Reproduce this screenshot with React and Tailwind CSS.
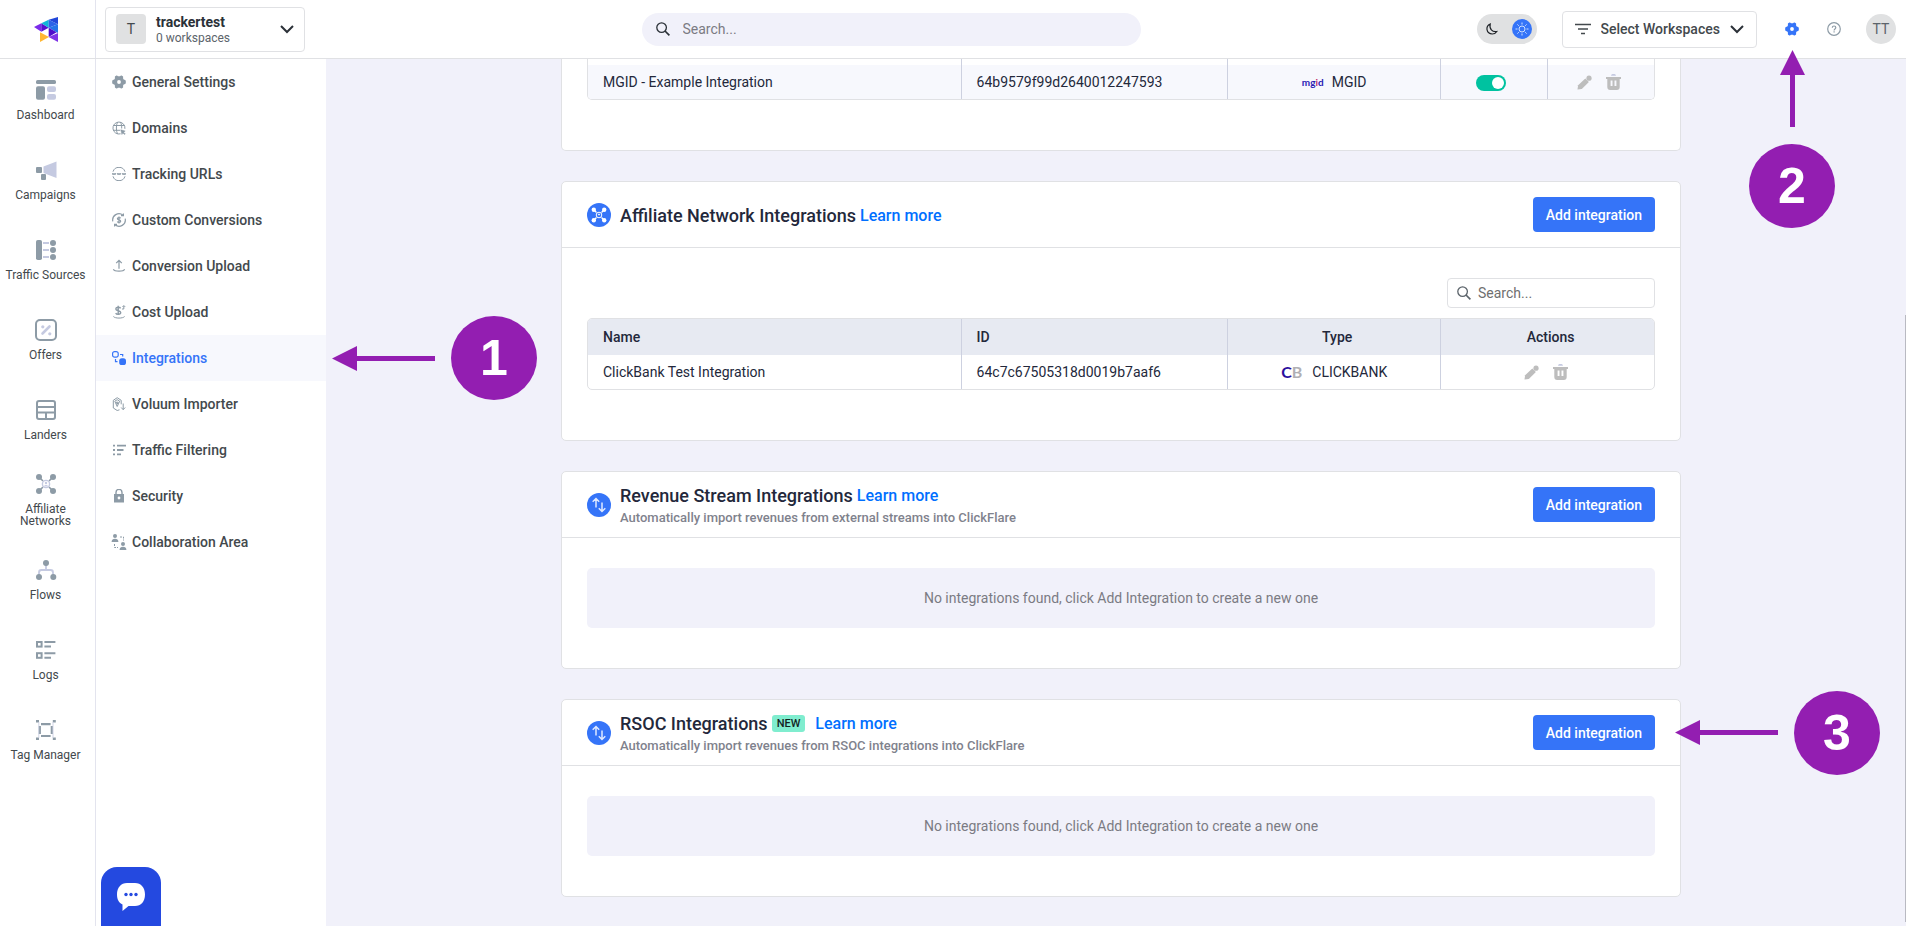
import { useState } from 'react'

const railItems = [
  { label: 'Dashboard', icon: DashboardIcon },
  { label: 'Campaigns', icon: CampaignsIcon },
  { label: 'Traffic Sources', icon: TrafficIcon },
  { label: 'Offers', icon: OffersIcon },
  { label: 'Landers', icon: LandersIcon },
  { label: 'Affiliate Networks', icon: NetworkIcon },
  { label: 'Flows', icon: FlowsIcon },
  { label: 'Logs', icon: LogsIcon },
  { label: 'Tag Manager', icon: TagIcon },
]

const settingsItems = [
  { label: 'General Settings', icon: GearIcon },
  { label: 'Domains', icon: DomainsIcon },
  { label: 'Tracking URLs', icon: UrlsIcon },
  { label: 'Custom Conversions', icon: ConversionsIcon },
  { label: 'Conversion Upload', icon: UploadIcon },
  { label: 'Cost Upload', icon: CostIcon },
  { label: 'Integrations', icon: IntegrationsIcon, active: true, step: 1 },
  { label: 'Voluum Importer', icon: VoluumIcon },
  { label: 'Traffic Filtering', icon: FilteringIcon },
  { label: 'Security', icon: LockIcon },
  { label: 'Collaboration Area', icon: CollaborationIcon },
]

function DashboardIcon() {
  return (
    <svg width="22" height="22" viewBox="0 0 22 22" fill="#8d9ba6">
      <rect x="1" y="1" width="20" height="4" rx="1.6" />
      <rect x="1" y="7.3" width="9" height="13.5" rx="2" />
      <rect x="12" y="7.3" width="9" height="5.6" rx="2" fill="#c5cae1" />
      <rect x="12" y="15" width="9" height="5.8" rx="2" fill="#c5cae1" />
    </svg>
  )
}

function CampaignsIcon() {
  return (
    <svg width="22" height="22" viewBox="0 0 22 22" fill="#8d9ba6">
      <rect x="1" y="8" width="6" height="6" rx="1" />
      <rect x="6" y="15" width="5" height="6" rx="1" />
      <path d="M8.5 7.5 21.5 2.5v16.5L8.5 14z" fill="#c5cae1" />
    </svg>
  )
}

function TrafficIcon() {
  return (
    <svg width="22" height="22" viewBox="0 0 22 22" fill="#8d9ba6">
      <rect x="1" y="1" width="6" height="20" rx="1.8" />
      <path d="M8 4h6M8 11h6M8 18h6" stroke="#c5cae1" strokeWidth="1.8" />
      <circle cx="18" cy="4" r="3" />
      <circle cx="18" cy="11" r="3" />
      <circle cx="18" cy="18" r="3" />
    </svg>
  )
}

function OffersIcon() {
  return (
    <svg width="22" height="22" viewBox="0 0 22 22" fill="none">
      <rect x="1" y="1" width="20" height="20" rx="4" stroke="#8d9ba6" strokeWidth="2" />
      <path d="M7.5 14.5l7-7" stroke="#c5cae1" strokeWidth="2.6" strokeLinecap="round" />
      <circle cx="7.8" cy="7.8" r="1.6" fill="#c5cae1" />
      <circle cx="14.8" cy="14.8" r="1.6" fill="#c5cae1" />
    </svg>
  )
}

function LandersIcon() {
  return (
    <svg width="22" height="22" viewBox="0 0 22 22" fill="none" stroke="#8d9ba6" strokeWidth="2">
      <rect x="2" y="2" width="18" height="18" rx="2" />
      <path d="M2 8h18M2 13.6h18M11 13.6V20" />
    </svg>
  )
}

function NetworkIcon() {
  return (
    <svg width="22" height="22" viewBox="0 0 22 22" fill="#8d9ba6">
      <path d="M4 4l4 4M18 4l-4 4M4 18l4-4M18 18l-4-4" stroke="#8d9ba6" strokeWidth="1.6" />
      <circle cx="4" cy="4" r="3" />
      <circle cx="18" cy="4" r="3" />
      <circle cx="4" cy="18" r="3" />
      <circle cx="18" cy="18" r="3" />
      <circle cx="11" cy="11" r="3.6" fill="none" stroke="#c5cae1" strokeWidth="1.4" />
      <circle cx="11" cy="10" r="1.2" fill="#c5cae1" />
      <path d="M8.8 13.4a2.4 2.4 0 0 1 4.4 0z" fill="#c5cae1" />
    </svg>
  )
}

function FlowsIcon() {
  return (
    <svg width="22" height="22" viewBox="0 0 22 22" fill="#8d9ba6">
      <path
        d="M11 4v7M4 18v-4.6A2.4 2.4 0 0 1 6.4 11h9.2a2.4 2.4 0 0 1 2.4 2.4V18"
        fill="none"
        stroke="#c5cae1"
        strokeWidth="1.8"
      />
      <circle cx="11" cy="4" r="3" />
      <circle cx="4" cy="18" r="3" />
      <circle cx="18.3" cy="18" r="3" />
    </svg>
  )
}

function LogsIcon() {
  return (
    <svg width="22" height="22" viewBox="0 0 22 22" fill="none" stroke="#8d9ba6" strokeWidth="2">
      <rect x="2" y="3" width="4.6" height="4.6" />
      <rect x="2" y="14.2" width="4.6" height="4.6" />
      <path d="M9.4 3h11M9.4 7.6h6.6M9.4 14.2h11M9.4 18.8h6.6" />
    </svg>
  )
}

function TagIcon() {
  return (
    <svg width="22" height="22" viewBox="0 0 22 22" fill="#8d9ba6">
      <path d="M6 5.2h9.6M6 17h9.6M4.8 7v8M16.8 7v8" stroke="#8d9ba6" strokeWidth="2.2" />
      <path d="M1 1h3v2.6H1zM17.8 1h3v2.600h-3zM1 18.400h3V21H1zM17.800 18.400h3V21h-3z" />
      <path d="M3.800 3v16M18 3v16" stroke="#c5cae1" strokeWidth=".8" />
    </svg>
  )
}

function GearIcon() {
  return (
    <svg width="14" height="14" viewBox="0 0 14 14" fill="currentColor">
      <path
        fillRule="evenodd"
        d="M3.6.9Q4.2.2 5 .6L6 1.3h2L9 .6q.8-.4 1.4.3l.7.6v1.9l.6 1.1 1.4.5q.7.3.7 1v2q0 .7-.7 1l-1.4.5-.6 1.1v1.9l-.7.6q-.6.7-1.4.3L8 12.7H6l-1 .7q-.8.4-1.4-.3l-.7-.6v-1.9l-.6-1.1L.9 9q-.7-.3-.7-1V6q0-.7.7-1l1.4-.5.6-1.100V1.500zM7 5.100a1.900 1.900 0 1 0 0 3.800 1.900 1.900 0 0 0 0-3.800z"
      />
    </svg>
  )
}

function DomainsIcon() {
  return (
    <svg width="14" height="14" viewBox="0 0 14 14" fill="none" stroke="currentColor">
      <path d="M8.6 12.8A6 6 0 1 1 12.9 7.8" />
      <path d="M5.500 1C4 4 4 10 5.500 13M8.500 1c1 2 1.300 4.500 1.200 6.500M1.300 4.500h11.400M1.300 9.300h6.900" />
      <path d="M8.800 8.800l4.400 1.300-1.600 1.200 1.700 1.700-.7.6-1.800-1.700-.9 1.600z" fill="currentColor" strokeWidth=".5" />
    </svg>
  )
}

function UrlsIcon() {
  return (
    <svg width="14" height="14" viewBox="0 0 14 14" fill="none" stroke="currentColor">
      <path d="M1 4.700a6.300 6.300 0 0 1 12 0M1 9.300a6.300 6.300 0 0 0 12 0" />
      <path d="M.2 6l.9 2 .9-2 .9 2 .9-2M5.2 6l.9 2 .9-2 .9 2 .9-2M10.200 6l.9 2 .9-2 .9 2 .9-2" strokeWidth=".9" />
    </svg>
  )
}

function ConversionsIcon() {
  return (
    <svg width="14" height="14" viewBox="0 0 14 14" fill="none" stroke="currentColor" strokeWidth="1.2">
      <path d="M.8 8.3A6.3 6.3 0 0 1 11 2.2M13.2 5.7A6.3 6.3 0 0 1 3 11.8M11.4.4v2.200H9M2.600 13.600v-2.200H5" />
      <path d="M8.700 5.200C8.200 4.200 5.400 4.300 5.400 5.700c0 1.500 3.300.9 3.300 2.500 0 1.600-2.900 1.600-3.400.4M7 3.500v7" />
    </svg>
  )
}

function UploadIcon() {
  return (
    <svg width="14" height="14" viewBox="0 0 14 14" fill="none" stroke="currentColor" strokeWidth="1.2">
      <path d="M7 9.800V1.400M4.200 4.200L7 1.300l2.800 2.900M1.400 10.300c1 2.500 10.200 2.500 11.200 0" />
    </svg>
  )
}

function CostIcon() {
  return (
    <svg width="14" height="14" viewBox="0 0 14 14" fill="none" stroke="currentColor" strokeWidth="1.4">
      <path d="M8.600 3.300C7.800 1.800 3.800 1.900 3.800 4.100c0 2.300 4.900 1.100 4.900 3.500 0 2.300-4.200 2.200-5 .5M6.200.8v9.200" />
      <path d="M1.400 11.500c1.600 2.100 9.600 2.100 11.200 0M10 4h1.800V1M10.500 1.900l1.300-1.400 1.400 1.400" strokeWidth="1" />
    </svg>
  )
}

function IntegrationsIcon() {
  return (
    <svg width="14" height="14" viewBox="0 0 14 14" fill="none" stroke="currentColor" strokeWidth="1.2">
      <rect x=".6" y=".6" width="5.600" height="5.600" rx="2" />
      <path d="M8 3.500h2.700v2M3.500 8v2.700h2" />
      <rect x="7.200" y="7.200" width="6.800" height="6.800" rx="2.600" fill="currentColor" stroke="none" />
    </svg>
  )
}

function VoluumIcon() {
  return (
    <svg width="14" height="14" viewBox="0 0 14 14" fill="none" stroke="currentColor">
      <path d="M7.500 12.800L5.200 13.500 1.300 11V3.300L5.200.7l4 2.600v4" />
      <path d="M2.800 4.200l2.400 5.300 2.500-5.300-2.500-1.500zM4.300 5.200h1.900l-1 2zM11.200 6.500v6M9.200 10.500l2 2.200 2-2.200" />
    </svg>
  )
}

function FilteringIcon() {
  return (
    <svg width="14" height="14" viewBox="0 0 14 14" fill="none" stroke="currentColor" strokeWidth="1.8">
      <path d="M1 2.700h2M1 7h2M1 11.300h2M5 2.700h9M5 7h6.500M5 11.300h4" />
    </svg>
  )
}

function LockIcon() {
  return (
    <svg width="14" height="14" viewBox="0 0 14 14" fill="currentColor">
      <path fillRule="evenodd" d="M2 5h10v8.500H2zM7 7.600a1.400 1.400 0 1 0 0 2.800 1.400 1.400 0 0 0 0-2.800z" />
      <path d="M4 5V3.400a3 3 0 0 1 6 0V5" fill="none" stroke="currentColor" strokeWidth="1.4" />
    </svg>
  )
}

function CollaborationIcon() {
  return (
    <svg width="16" height="16" viewBox="0 0 16 16" fill="currentColor" className="shrink-0">
      <circle cx="4" cy="2" r="2" />
      <path d="M.6 8C.6 5.500 2 4.800 4 4.800S7.400 5.500 7.400 8z" />
      <circle cx="12" cy="10" r="2" />
      <path d="M8.600 16c0-2.500 1.400-3.200 3.400-3.200s3.400.7 3.400 3.200z" />
      <path d="M9 3h3.500v3.500M3.500 10v3.500H7" fill="none" stroke="currentColor" strokeDasharray="2 1" />
    </svg>
  )
}

function Logo() {
  return (
    <svg width="24" height="25" viewBox="0 0 72 75">
      <path d="M0 30l22-11v25z" fill="#7b2bea" />
      <path d="M22 19v25l22-12z" fill="#5410cf" />
      <path d="M22 19L44 8v24z" fill="#0fb6d8" />
      <path d="M44 8L72 0v22z" fill="#2147d9" />
      <path d="M44 8v24l28-10z" fill="#2c63e8" />
      <path d="M44 32l28-10v26z" fill="#2474e8" />
      <path d="M44 32v28l24-14z" fill="#4e0fcb" />
      <path d="M44 60l28-12v27z" fill="#7f35e6" />
      <path d="M18 46v29l27-15z" fill="#ffb733" />
    </svg>
  )
}

function Chevron() {
  return (
    <svg width="14" height="9" viewBox="0 0 14 9" fill="none" stroke="#2b3138" strokeWidth="2">
      <path d="M1 1l6 6 6-6" />
    </svg>
  )
}

function SearchIcon() {
  return (
    <svg width="14" height="14" viewBox="0 0 14 14" fill="none" stroke="currentColor">
      <circle cx="5.6" cy="5.6" r="4.8" strokeWidth="1.3" />
      <path d="M9 9l4.400 4.400" strokeWidth="1.7" />
    </svg>
  )
}

function PencilIcon() {
  return (
    <svg width="15" height="16" viewBox="0 0 15 16" fill="#bdbdbd">
      <path d="M.5 15.500l.6-4.300 7.200-6.700 3.600 3.600-7.100 6.800z" />
      <circle cx="12" cy="4.200" r="2.600" />
    </svg>
  )
}

function TrashIcon() {
  return (
    <svg width="15" height="16" viewBox="0 0 15 16">
      <path d="M5 1.700Q5.200 0 6.500 0h2Q9.800 0 10 1.700z" fill="#c5cae1" />
      <path
        fillRule="evenodd"
        fill="#bdbdbd"
        d="M0 3h15v2h-1.300v8q0 3-3 3H4.300q-3 0-3-3V5H0zM4.600 6.500V12h1.900V6.500zM8.500 6.500V12h1.900V6.500z"
      />
    </svg>
  )
}

function NetworkBadge() {
  return (
    <svg width="24" height="24" viewBox="0 0 24 24" className="shrink-0">
      <circle cx="12" cy="12" r="12" fill="#3574f8" />
      <g fill="#fff" stroke="#fff">
        <path d="M6.500 6.500l3 3M17.500 6.500l-3 3M6.500 17.500l3-3M17.500 17.500l-3-3" strokeWidth="1.4" />
        <g stroke="none">
          <circle cx="6.800" cy="6.800" r="2.200" />
          <circle cx="17.200" cy="6.800" r="2.200" />
          <circle cx="6.800" cy="17.200" r="2.200" />
          <circle cx="17.200" cy="17.200" r="2.200" />
        </g>
        <circle cx="12" cy="12" r="2.800" fill="#3574f8" />
        <circle cx="12" cy="11.500" r=".6" />
      </g>
    </svg>
  )
}

function StreamBadge() {
  return (
    <svg width="24" height="24" viewBox="0 0 24 24" className="shrink-0">
      <circle cx="12" cy="12" r="12" fill="#3574f8" />
      <path
        d="M9 14.500V6M5.700 8.700L9 5.500l3.200 3.200M15 9.500V18M11.800 15.300L15 18.500l3.300-3.200"
        fill="none"
        stroke="#dfe9ff"
        strokeWidth="1.5"
      />
    </svg>
  )
}

// numbered callout of the walkthrough, the parent places it beside its anchor
function Step({ number, direction = 'left' }) {
  const vertical = direction === 'up'

  return (
    <div className={`flex items-center ${vertical ? 'flex-col gap-[17px]' : 'gap-4'}`}>
      {vertical ? (
        <svg width="25" height="77" viewBox="0 0 25 77" fill="#931eb1" className="shrink-0">
          <path d="M12.500 0L25 25H15v52h-5V25H0z" />
        </svg>
      ) : (
        <svg width="103" height="25" viewBox="0 0 103 25" fill="#931eb1" className="shrink-0">
          <path d="M0 12.500L25 0v10h78v5H25v10z" />
        </svg>
      )}
      <span className="flex h-[84px] w-[86px] shrink-0 items-center justify-center rounded-[50%] bg-[#931eb1] font-['Liberation_Sans',sans-serif] text-[50px] font-bold leading-none text-white">
        {number}
      </span>
    </div>
  )
}

function Header() {
  const [workspace, setWorkspace] = useState('')

  return (
    <header className="relative z-20 flex h-[59px] shrink-0 items-center justify-between border-b border-[#e0e1e4] bg-white pr-2.5">
      <div className="flex h-full items-center">
        <a
          href="#home"
          aria-label="Home"
          className="flex h-full w-24 items-center justify-center border-r border-[#e3e4ee] pr-1"
        >
          <Logo />
        </a>
        <button
          type="button"
          className="ml-[9px] flex h-[45px] w-[200px] items-center rounded border border-[#e0e1e4] px-2.5 text-left"
        >
          <span className="flex size-[30px] items-center justify-center rounded bg-[#e0e1e2] text-sm text-[#43494d]">T</span>
          <span className="ml-2.5 flex-1 pt-0.5">
            <span className="block text-sm leading-4 font-bold text-[#2b3138]">trackertest</span>
            <span className="block text-xs leading-4 text-[#5c646b]">0 workspaces</span>
          </span>
          <Chevron />
        </button>
      </div>

      <label className="flex h-[33px] w-[499px] items-center rounded-full bg-[#f1f1fa] px-3.5 text-[#2b3138]">
        <SearchIcon />
        <input
          type="search"
          aria-label="Search"
          placeholder="Search..."
          className="ml-[13px] min-w-0 flex-1 bg-transparent text-sm outline-none placeholder:text-[#7b7b83]"
        />
      </label>

      <div className="flex items-center">
        <button
          type="button"
          aria-label="Switch theme"
          className="flex h-[30px] w-[60px] items-center justify-between rounded-full bg-[#e0e1e2] py-[5px] pr-[5px] pl-2"
        >
          <svg width="14" height="14" viewBox="0 0 14 14" fill="none" stroke="#1f2328" strokeWidth="1.2">
            <path d="M5.200 2C3 3 1.600 5 2 7.700 2.500 10.400 4.700 12 7.300 12c2 0 3.600-1 4.500-2.500C7.300 10.300 4 7 5.200 2z" />
          </svg>
          <svg width="20" height="20" viewBox="0 0 20 20">
            <circle cx="10" cy="10" r="10" fill="#3574f8" />
            <g fill="none" stroke="#cfe0ff">
              <circle cx="10" cy="10" r="3" />
              <path d="M10 3.500v2M10 14.500v2M3.500 10h2M14.500 10h2M5.400 5.400l1.400 1.400M13.200 13.200l1.400 1.400M5.400 14.600l1.400-1.400M13.200 6.800l1.400-1.400" />
            </g>
          </svg>
        </button>
        <label className="ml-[25px] flex h-[37px] w-[195px] items-center justify-between rounded border border-[#e0e1e4] px-3">
          <svg width="16" height="12" viewBox="0 0 16 12" stroke="#43494d" strokeWidth="1.5">
            <path d="M0 1.500h16M3 6h10M6 10.500h4" />
          </svg>
          <select
            aria-label="Select Workspaces"
            value={workspace}
            onChange={(event) => setWorkspace(event.target.value)}
            className="appearance-none bg-transparent text-sm font-medium text-[#43494d] outline-none"
          >
            <option value="">Select Workspaces</option>
          </select>
          <Chevron />
        </label>
        <div className="relative ml-7">
          <button type="button" aria-label="Settings" className="block text-[#3574f8]">
            <GearIcon />
          </button>
          <div className="pointer-events-none absolute top-full left-1/2 mt-3.5 -translate-x-1/2">
            <Step number={2} direction="up" />
          </div>
        </div>
        <button type="button" aria-label="Help" className="ml-7">
          <svg width="14" height="14" viewBox="0 0 14 14" fill="none" stroke="#8d9ba6" strokeWidth="1.2">
            <circle cx="7" cy="7" r="6.300" />
            <path d="M5.300 5.700c0-2.300 3.500-2.200 3.500-.1C8.800 7 7.100 7 7.100 8.400M7.100 9.300v1.300" />
          </svg>
        </button>
        <button
          type="button"
          className="ml-[25px] flex size-[30px] items-center justify-center rounded-full bg-[#e0e1e2] text-sm text-[#5c646b]"
        >
          TT
        </button>
      </div>
    </header>
  )
}

function Rail() {
  return (
    <nav aria-label="Main" className="w-24 shrink-0 border-r border-[#e3e4ee] bg-white pt-px pr-1">
      {railItems.map(({ label, icon: Icon }) => (
        <a
          key={label}
          href="#section"
          className="flex h-20 flex-col items-center justify-center gap-2 text-center text-xs leading-3 text-[#43494d]"
        >
          <Icon />
          <span className={label === 'Affiliate Networks' ? 'w-16' : 'whitespace-nowrap'}>{label}</span>
        </a>
      ))}
    </nav>
  )
}

function SettingsMenu() {
  return (
    <nav aria-label="Settings" className="relative z-10 w-[230px] shrink-0 bg-white">
      {settingsItems.map(({ label, icon: Icon, active, step }) => (
        <div key={label} className="relative">
          <a
            href="#settings"
            className={`flex h-[46px] items-center gap-1.5 pl-4 text-sm font-medium ${
              active ? 'bg-[#f7f8fd] text-[#3574f8]' : 'text-[#43494d]'
            }`}
          >
            <span className={`flex w-3.5 justify-center ${active ? '' : 'text-[#8d9ba6]'}`}>
              <Icon />
            </span>
            {label}
          </a>
          {step && (
            <div className="pointer-events-none absolute top-1/2 left-full ml-1.5 -translate-y-1/2">
              <Step number={step} />
            </div>
          )}
        </div>
      ))}
    </nav>
  )
}

function Card({ icon, title, subtitle, isNew, step, children }) {
  return (
    <section className="rounded-[5px] border border-[#e0e1e4] bg-white">
      <header className="flex h-[66px] items-center gap-[9px] border-b border-[#e0e1e4] px-[25px]">
        {icon}
        <div className="flex-1 pt-0.5">
          <div className="flex items-center gap-1">
            <h2 className="text-lg leading-5 font-medium text-[#23283b]">{title}</h2>
            {isNew && (
              <span className="mr-1.5 rounded-[3px] bg-[#80edcf] px-[5px] text-[11px] leading-[17px] font-medium text-[#14231f]">
                NEW
              </span>
            )}
            <a href="#learn" className="text-base leading-5 font-medium text-[#006fff]">
              Learn more
            </a>
          </div>
          {subtitle && <p className="mt-1 text-[13px] leading-4 font-medium text-[#7f828d]">{subtitle}</p>}
        </div>
        <div className="relative">
          <button type="button" className="h-[35px] rounded bg-[#3574f8] px-[13px] text-sm font-medium text-white">
            Add integration
          </button>
          {step && (
            <div className="pointer-events-none absolute top-1/2 left-full ml-5 -translate-y-1/2">
              <Step number={step} />
            </div>
          )}
        </div>
      </header>
      {children}
    </section>
  )
}

function EmptyNotice() {
  return (
    <div className="px-[25px] pt-[30px] pb-10">
      <p className="rounded-[5px] bg-[#f1f1fa] text-center text-sm leading-[60px] text-[#7b7b83]">
        No integrations found, click Add Integration to create a new one
      </p>
    </div>
  )
}

function RowActions() {
  return (
    <div className="flex items-center justify-center gap-3.5 pr-1">
      <button type="button" aria-label="Edit">
        <PencilIcon />
      </button>
      <button type="button" aria-label="Delete">
        <TrashIcon />
      </button>
    </div>
  )
}

function App() {
  return (
    <div className="flex h-screen flex-col overflow-hidden bg-[#f1f1fa] font-[Roboto,sans-serif] text-[#23283b]">
      <Header />

      <div className="relative flex min-h-0 flex-1">
        <Rail />
        <SettingsMenu />

        <main className="min-w-0 flex-1 overflow-hidden pl-2.5">
          <div className="mx-auto flex max-w-[1120px] flex-col gap-[30px]">
            <section className="rounded-b-[5px] border border-t-0 border-[#e0e1e4] bg-white px-[25px] pb-[50px]">
              <div className="overflow-hidden rounded-b-[5px] border border-t-0 border-[#e0e1e4]">
                <table className="w-full table-fixed text-sm">
                  <colgroup>
                    <col className="w-[35%]" />
                    <col className="w-[25%]" />
                    <col className="w-[20%]" />
                    <col className="w-[10%]" />
                    <col className="w-[10%]" />
                  </colgroup>
                  <tbody>
                    <tr className="h-1.5 divide-x divide-[#cdd1e0]">
                      <td />
                      <td />
                      <td />
                      <td />
                      <td />
                    </tr>
                    <tr className="h-[34px] divide-x divide-[#cdd1e0] bg-[#f7f8fd]">
                      <td className="px-[15px]">MGID - Example Integration</td>
                      <td className="px-[15px]">64b9579f99d2640012247593</td>
                      <td>
                        <div className="flex items-center justify-center gap-2.5">
                          <span
                            aria-hidden="true"
                            className="w-5 text-center font-[Lato,sans-serif] text-[10px] leading-none font-bold text-[#2a1bb5]"
                          >
                            mg<span className="text-[#c02a6a]">i</span>d
                          </span>
                          MGID
                        </div>
                      </td>
                      <td>
                        <div className="flex justify-center pt-0.5 pr-1.5">
                          <input
                            type="checkbox"
                            defaultChecked
                            aria-label="MGID integration enabled"
                            className="flex h-4 w-[30px] appearance-none items-center justify-end rounded-full bg-[#00c2a0] px-0.5 before:size-3 before:rounded-full before:bg-white"
                          />
                        </div>
                      </td>
                      <td>
                        <RowActions />
                      </td>
                    </tr>
                  </tbody>
                </table>
              </div>
            </section>

            <Card icon={<NetworkBadge />} title="Affiliate Network Integrations">
              <div className="flex flex-col gap-2.5 px-[25px] pt-[30px] pb-[50px]">
                <label className="flex h-[30px] w-[208px] items-center self-end rounded border border-[#e0e1e4] px-[9px] text-[#5c646b]">
                  <SearchIcon />
                  <input
                    type="search"
                    aria-label="Search integrations"
                    placeholder="Search..."
                    className="ml-[7px] min-w-0 flex-1 bg-transparent text-sm outline-none placeholder:text-[#6f6f6f]"
                  />
                </label>
                <div className="overflow-hidden rounded-[5px] border border-[#e0e1e4]">
                  <table className="w-full table-fixed text-sm">
                    <colgroup>
                      <col className="w-[35%]" />
                      <col className="w-[25%]" />
                      <col className="w-[20%]" />
                      <col className="w-[20%]" />
                    </colgroup>
                    <thead>
                      <tr className="h-9 divide-x divide-[#cdd1e0] bg-[#e7eaf2]">
                        <th className="px-[15px] text-left font-medium">Name</th>
                        <th className="px-[15px] text-left font-medium">ID</th>
                        <th className="pl-1.5 font-medium">Type</th>
                        <th className="pl-1.5 font-medium">Actions</th>
                      </tr>
                    </thead>
                    <tbody>
                      <tr className="h-[34px] divide-x divide-[#cdd1e0]">
                        <td className="px-[15px]">ClickBank Test Integration</td>
                        <td className="px-[15px]">64c7c67505318d0019b7aaf6</td>
                        <td>
                          <div className="flex items-center justify-center gap-2.5">
                            <span
                              aria-hidden="true"
                              className="font-[Lato,sans-serif] text-base leading-none font-bold text-[#b0b0b4]"
                            >
                              <span className="text-[#2b0f9e]">C</span>B
                            </span>
                            CLICKBANK
                          </div>
                        </td>
                        <td>
                          <RowActions />
                        </td>
                      </tr>
                    </tbody>
                  </table>
                </div>
              </div>
            </Card>

            <Card
              icon={<StreamBadge />}
              title="Revenue Stream Integrations"
              subtitle="Automatically import revenues from external streams into ClickFlare"
            >
              <EmptyNotice />
            </Card>

            {/* the callout reaches past the card, into the free margin on the right */}
            <Card
              icon={<StreamBadge />}
              title="RSOC Integrations"
              subtitle="Automatically import revenues from RSOC integrations into ClickFlare"
              isNew
              step={3}
            >
              <EmptyNotice />
            </Card>
          </div>
        </main>

        <button
          type="button"
          aria-label="Open chat"
          className="absolute bottom-0 left-[101px] z-20 flex h-[59px] w-[60px] items-center justify-center rounded-t-2xl bg-[#2449e0]"
        >
          <svg width="28" height="28" viewBox="0 0 28 28">
            <path
              d="M10 0h8c6 0 10 4.500 10 11.500S24 23 18 23h-6.500L5.500 28v-6.500C2 20 0 16.500 0 11.500 0 4.500 4 0 10 0z"
              fill="#fff"
            />
            <g fill="#2449e0">
              <circle cx="9" cy="11.500" r="1.700" />
              <circle cx="14" cy="11.500" r="1.700" />
              <circle cx="19" cy="11.500" r="1.700" />
            </g>
          </svg>
        </button>

        <div aria-hidden="true" className="absolute right-0 bottom-1 h-[70%] w-px bg-[#b9bac2]" />
      </div>
    </div>
  )
}

export default App
